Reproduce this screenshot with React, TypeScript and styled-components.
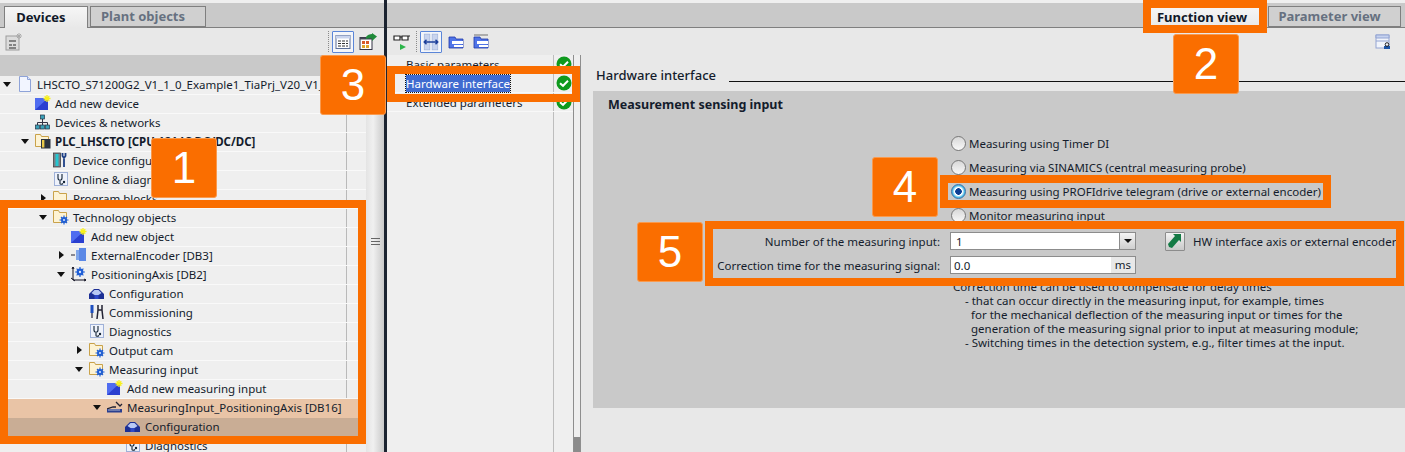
import React from "react";
import styled, { createGlobalStyle } from "styled-components";

const Global = createGlobalStyle`
  html, body { margin: 0; padding: 0; background: #efefef; }
  body { font-family: "Noto Sans", "DejaVu Sans", sans-serif; font-size: 11.5px; color: #141c2c; }
  * { box-sizing: border-box; }
`;

const ORANGE = "#fa6e00";

const Root = styled.div`
  position: relative;
  width: 1405px;
  height: 452px;
  overflow: hidden;
  display: flex;
`;
const LeftPane = styled.div`
  width: 384px;
  display: flex;
  flex-direction: column;
`;
const Divider = styled.div`
  width: 3px;
  background: #1b2330;
`;
const RightPane = styled.div`
  flex: 1;
  display: flex;
  flex-direction: column;
  min-width: 0;
`;
const TabBar = styled.div<{ $end?: boolean }>`
  height: 28px;
  flex: none;
  background: #c9c9c9;
  border-top: 3px solid #efefef;
  border-bottom: 1px solid #7f7f7f;
  display: flex;
  align-items: flex-end;
  justify-content: ${(p) => (p.$end ? "flex-end" : "flex-start")};
  padding: ${(p) => (p.$end ? "0 4px 0 0" : "0 0 0 4px")};
  gap: 2px;
`;
const Tab = styled.div<{ $active?: boolean; $w: number }>`
  width: ${(p) => p.$w}px;
  height: ${(p) => (p.$active ? 22 : 21)}px;
  margin-bottom: ${(p) => (p.$active ? -1 : 0)}px;
  border: 1px solid #7f7f7f;
  border-bottom: ${(p) => (p.$active ? "none" : "1px solid #7f7f7f")};
  background: ${(p) => (p.$active ? "linear-gradient(#f6f6f6, #e8e8e8)" : "#d0d0d0")};
  color: ${(p) => (p.$active ? "#101828" : "#667080")};
  font-size: 13px;
  font-weight: 700;
  padding-right: 10px;
  padding-bottom: 2px;
  display: flex;
  align-items: center;
  justify-content: center;
`;
const Toolbar = styled.div<{ $pad: string }>`
  height: 27px;
  flex: none;
  background: #e8e8e8;
  display: flex;
  align-items: center;
  justify-content: space-between;
  padding: ${(p) => p.$pad};
`;
const ToolGroup = styled.div`
  display: flex;
  align-items: center;
  gap: 3px;
`;
const ToolSep = styled.div`
  width: 1px;
  height: 21px;
  border-left: 1px dotted #8a8a8a;
`;
const ToolBtn = styled.div<{ $on?: boolean }>`
  width: 22px;
  height: 22px;
  display: flex;
  align-items: center;
  justify-content: center;
  border: 1px solid ${(p) => (p.$on ? "#5b86d8" : "transparent")};
  background: ${(p) => (p.$on ? "#f4f6fa" : "transparent")};
  border-radius: 1px;
`;
const GrayHead = styled.div`
  height: 21px;
  flex: none;
  background: #c9c9c9;
`;
const TreeWrap = styled.div`
  flex: 1;
  display: flex;
  min-height: 0;
`;
const Tree = styled.div`
  width: 366px;
  flex: none;
  background: #efefef;
  overflow: hidden;
`;
const Row = styled.div<{ $level: number; $tone?: "open" | "sel" }>`
  height: 19px;
  display: flex;
  align-items: center;
  padding-left: ${(p) => p.$level * 18}px;
  padding-bottom: 2px;
  border-bottom: 1px solid ${(p) => (p.$tone ? "transparent" : "#f9f9f9")};
  background: ${(p) => (p.$tone === "open" ? "#e9c4a6" : p.$tone === "sel" ? "#c9ad95" : "linear-gradient(to right, transparent 346px, #b9b9b9 346px, #b9b9b9 347px, transparent 347px)")};
  white-space: nowrap;
`;
const Arrow = styled.span<{ $dir?: "down" | "right" }>`
  width: 14px;
  flex: none;
  display: flex;
  justify-content: center;
  &::before {
    content: "";
    display: ${(p) => (p.$dir ? "block" : "none")};
    border-style: solid;
    border-color: transparent;
    ${(p) =>
      p.$dir === "down"
        ? "border-width: 5px 4px 0 4px; border-top-color: #111;"
        : "border-width: 4px 0 4px 5px; border-left-color: #111;"}
  }
`;
const IconCell = styled.span`
  width: 18px;
  height: 16px;
  margin-left: 3px;
  flex: none;
  display: flex;
  align-items: center;
  justify-content: flex-start;
`;
const RowText = styled.span<{ $bold?: boolean }>`
  margin-left: 2px;
  font-weight: ${(p) => (p.$bold ? 700 : 400)};
`;
const SplitBar = styled.div`
  flex: 1;
  background: linear-gradient(to right, #e4e4e4, #f0f0f0 40%, #c9c9c9);
  display: flex;
  align-items: center;
  justify-content: center;
  padding-bottom: 46px;
`;
const Grip = styled.div`
  width: 9px;
  height: 7px;
  border-top: 1px solid #666;
  border-bottom: 1px solid #666;
  &::after {
    content: "";
    display: block;
    height: 1px;
    margin-top: 2px;
    background: #666;
  }
`;
const Workspace = styled.div`
  flex: 1;
  display: flex;
  min-height: 0;
`;
const Nav = styled.div`
  width: 186px;
  flex: none;
  background: #efefef;
  display: flex;
  flex-direction: column;
  background-image: linear-gradient(to right, transparent 166px, #bdbdbd 166px, #bdbdbd 167px, transparent 167px);
`;
const NavRow = styled.div`
  height: 19px;
  flex: none;
  display: flex;
  align-items: center;
  justify-content: space-between;
  padding: 0 1px 0 19px;
  border-bottom: 1px solid #f8f8f8;
`;
const NavLabel = styled.span<{ $sel?: boolean }>`
  background: ${(p) => (p.$sel ? "#3f6bd0" : "transparent")};
  color: ${(p) => (p.$sel ? "#fff" : "inherit")};
  outline: ${(p) => (p.$sel ? "1px dotted #111" : "none")};
  line-height: 17px;
`;
const NavScroll = styled.div`
  width: 8px;
  flex: none;
  background: #efefef;
  border-left: 1px solid #8e8e8e;
  border-right: 1px solid #8e8e8e;
  display: flex;
  flex-direction: column;
  justify-content: flex-end;
`;
const NavThumb = styled.div`
  height: 15px;
  background: #8b8b8b;
`;
const Content = styled.div`
  flex: 1;
  min-width: 0;
  background: #e8e8e8;
  padding: 12px 0 44px 12px;
  display: flex;
  flex-direction: column;
`;
const Heading = styled.div`
  height: 24px;
  flex: none;
  display: flex;
  align-items: flex-start;
  padding-left: 3px;
  gap: 13px;
  font-size: 13px;
  font-weight: 500;
  line-height: 17px;
`;
const HeadRule = styled.div`
  flex: 1;
  height: 1px;
  margin-top: 14px;
  background: #111;
`;
const Panel = styled.div`
  flex: 1;
  background: #c9c9c9;
  padding: 5px 11px 0 15px;
  display: flex;
  flex-direction: column;
`;
const PanelTitle = styled.div`
  font-size: 12.5px;
  font-weight: 700;
  line-height: 18px;
`;
const Radios = styled.div`
  margin: 17px 0 0 343px;
  display: flex;
  flex-direction: column;
`;
const RadioRow = styled.div`
  height: 24px;
  display: flex;
  align-items: center;
  gap: 3px;
  white-space: nowrap;
`;
const Radio = styled.span<{ $on?: boolean }>`
  width: 15px;
  height: 15px;
  flex: none;
  border-radius: 50%;
  border: 1px solid ${(p) => (p.$on ? "#3c6ea5" : "#777")};
  background: ${(p) =>
    p.$on
      ? "radial-gradient(circle at 50% 50%, #0c3f94 0 3px, #fff 3.5px 4px, #49bce8 6px)"
      : "linear-gradient(#d8d8d8, #f8f8f8)"};
`;
const FormGrid = styled.div`
  display: grid;
  grid-template-columns: 332px 186px auto;
  grid-auto-rows: 24px;
  align-items: center;
  column-gap: 10px;
  margin-top: 2px;
`;
const FieldLabel = styled.div`
  text-align: right;
  white-space: nowrap;
`;
const Field = styled.div`
  height: 18px;
  background: #fff;
  border: 1px solid #8c8c8c;
  display: flex;
  align-items: center;
  justify-content: space-between;
`;
const FieldValue = styled.span<{ $pad: number }>`
  padding-left: ${(p) => p.$pad}px;
`;
const DropBtn = styled.span`
  width: 16px;
  height: 16px;
  background: linear-gradient(#f4f4f4, #cfcfcf);
  border-left: 1px solid #8c8c8c;
  display: flex;
  align-items: center;
  justify-content: center;
  &::before {
    content: "";
    border-style: solid;
    border-width: 4px 4px 0 4px;
    border-color: #111 transparent transparent transparent;
  }
`;
const Unit = styled.span`
  width: 24px;
  height: 16px;
  background: #e8e8e8;
  line-height: 16px;
  text-align: center;
`;
const LinkCell = styled.div`
  display: flex;
  align-items: center;
  gap: 8px;
  margin-left: 19px;
  white-space: nowrap;
`;
const LinkBtn = styled.span`
  width: 20px;
  height: 19px;
  border: 1px solid #8c8c8c;
  border-radius: 1px;
  background: linear-gradient(#f3f3f3, #c9c9c9);
  display: flex;
  align-items: center;
  justify-content: center;
`;
const Help = styled.div`
  margin: 3px 0 0 345px;
  line-height: 14px;
  white-space: nowrap;
`;
const HelpLine = styled.div<{ $indent: number }>`
  padding-left: ${(p) => p.$indent}px;
`;

const Mark = styled.div<{ $x: number; $y: number; $w: number; $h: number }>`
  position: absolute;
  left: ${(p) => p.$x}px;
  top: ${(p) => p.$y}px;
  width: ${(p) => p.$w}px;
  height: ${(p) => p.$h}px;
  border: 8px solid ${ORANGE};
  pointer-events: none;
`;
const Badge = styled.div<{ $x: number; $y: number }>`
  position: absolute;
  left: ${(p) => p.$x}px;
  top: ${(p) => p.$y}px;
  width: 66px;
  height: 60px;
  background: ${ORANGE};
  border-radius: 3px;
  border: 1px solid #f99a4e;
  color: #fff;
  font-family: "Liberation Sans", Arial, sans-serif;
  font-size: 44px;
  line-height: 58px;
  text-align: center;
`;

/* ---------- icons ---------- */
const Svg = styled.svg`
  display: block;
  flex: none;
`;
const Ico = ({ children, s = 16 }: { children: React.ReactNode; s?: number }) => (
  <Svg width={s} height={s} viewBox="0 0 16 16">{children}</Svg>
);
const Doc = () => (
  <Ico>
    <path d="M2.5 .5h8l3 3v12h-11z" fill="#f2f5ff" stroke="#8ea3d8" />
    <path d="M10.5 .5v3h3" fill="#dfe6fa" stroke="#8ea3d8" />
  </Ico>
);
const AddNew = () => (
  <Ico>
    <path d="M0 3h13v12H0z" fill="#2a3fd0" />
    <path d="M0 3h13L0 15z" fill="#4f6cf0" />
    <path d="M12 0v7M8.5 3.5h7M9.7 1.2l4.6 4.6M14.3 1.2L9.7 5.8" stroke="#f7f01e" strokeWidth="1.3" />
  </Ico>
);
const Network = () => (
  <Ico>
    <path d="M7.5 5v4M2.5 11V8.500h10V11M7.500 8.500V11" stroke="#334" fill="none" />
    <rect x="5.500" y="1" width="4" height="4" fill="#3aa0b8" stroke="#234" strokeWidth=".7" />
    <rect x="0.500" y="11" width="4" height="4" fill="#3aa0b8" stroke="#234" strokeWidth=".7" />
    <rect x="5.500" y="11" width="4" height="4" fill="#3aa0b8" stroke="#234" strokeWidth=".7" />
    <rect x="10.500" y="11" width="4" height="4" fill="#3aa0b8" stroke="#234" strokeWidth=".7" />
  </Ico>
);
const Folder = ({ children }: { children?: React.ReactNode }) => (
  <Ico>
    <path d="M.5 1.500h5l1 2h7v10H.5z" fill="#fdf3d4" stroke="#c9a24a" />
    {children}
  </Ico>
);
const Plc = () => (
  <Folder>
    <rect x="6" y="6" width="9.500" height="9.500" fill="#2b3340" />
    <rect x="7" y="7" width="2.400" height="7.500" fill="#e9c94a" />
  </Folder>
);
const GearMark = ({ x = 11, y = 11, r = 3 }: { x?: number; y?: number; r?: number }) => (
  <g>
    <circle cx={x} cy={y} r={r} fill="#1f5fd6" />
    <path d={`M${x - r - 1.5} ${y}h${2 * r + 3}M${x} ${y - r - 1.5}v${2 * r + 3}M${x - r} ${y - r}l${2 * r} ${2 * r}M${x + r} ${y - r}l${-2 * r} ${2 * r}`} stroke="#1f5fd6" strokeWidth="1.2" />
    <circle cx={x} cy={y} r={r / 3} fill="#dfe9ff" />
  </g>
);
const TechFolder = () => (
  <Folder>
    <GearMark />
  </Folder>
);
const DevConfig = () => (
  <Ico>
    <rect x="0.500" y="1" width="7" height="14" fill="#7b7f87" stroke="#333" strokeWidth=".7" />
    <rect x="2.500" y="2" width="3" height="12" fill="#26c6d0" />
    <path d="M11 7v8M9.500 1v3l1.500 2 1.500-2V1" stroke="#1d3f86" strokeWidth="1.800" fill="none" />
  </Ico>
);
const Diag = () => (
  <Ico>
    <rect x="1.500" y="1.500" width="13" height="13" fill="#eef2fb" stroke="#9fb1d8" />
    <path d="M5 3v4c0 3 4 3 4 0V3M7 10v2.500c0 1 2 1 3 0" stroke="#123" strokeWidth="1.100" fill="none" />
    <circle cx="11" cy="11" r="1.200" fill="#123" />
  </Ico>
);
const Encoder = () => (
  <Ico>
    <path d="M0 8h4" stroke="#223" />
    <rect x="5" y="3" width="4" height="10" fill="#7fa6ea" />
    <rect x="8" y="1" width="7" height="13" fill="#5b88e6" />
  </Ico>
);
const Axis = () => (
  <Ico>
    <path d="M2 1v13h13M0 12l4 3M1 3l1-2 1 2M13 13l2 1-2 1" stroke="#112" fill="none" />
    <GearMark x={9} y={6} r={3.400} />
  </Ico>
);
const Dome = () => (
  <Ico>
    <path d="M0 14V9l5-5h5l5 5v5z" fill="#1c2f95" />
    <path d="M2.500 8l3-3h4l3 3-3 2h-4z" fill="#b8c8f4" />
    <path d="M5.500 10h4v4h-4z" fill="#2f49c8" />
  </Ico>
);
const Tools = () => (
  <Ico>
    <path d="M3 1v8" stroke="#1d4fc0" strokeWidth="3" />
    <path d="M3 9v5" stroke="#556" strokeWidth="1.600" />
    <path d="M9 1v5l-1 9M13 1v5l1 9M9 6h4" stroke="#223" strokeWidth="1.500" fill="none" />
  </Ico>
);
const MeasIcon = () => (
  <Ico>
    <path d="M0 10l6-2h3M9 3l4 4 2-2" stroke="#223" fill="none" strokeWidth="1.300" />
    <rect x="0" y="10" width="15" height="3.500" fill="#2a3f8f" />
    <path d="M2 10v2M4 10v2M6 10v2M8 10v2M10 10v2M12 10v2" stroke="#e9e9e9" strokeWidth=".7" />
  </Ico>
);
const Check = () => (
  <Ico>
    <circle cx="8" cy="8" r="7.500" fill="#0f9a1e" />
    <path d="M4 8.200l3 2.600 5-5" stroke="#fff" strokeWidth="2" fill="none" />
  </Ico>
);
const DeviceGrid = () => (
  <Svg width="18" height="18" viewBox="0 0 18 18">
    <rect x="1" y="3" width="13" height="14" fill="#dcdcdc" stroke="#9c9c9c" />
    <path d="M4 8h7M4 12h3M8 12h3M4 15h7" stroke="#666" strokeWidth="1.500" />
    <path d="M14 0v6M11 3h6M12 1l4 4M16 1l-4 4" stroke="#aaa" />
  </Svg>
);
const TableView = () => (
  <Ico>
    <rect x="1" y="1.500" width="14" height="13" fill="#fff" stroke="#5c6f98" />
    <path d="M1 1.500h14v3H1z" fill="#c9d4ee" />
    <path d="M3 7h10M3 9.500h10M3 12h10" stroke="#333" strokeDasharray="3 1" />
  </Ico>
);
const TableExport = () => (
  <Svg width="18" height="18" viewBox="0 0 18 18">
    <rect x="1" y="4.500" width="12" height="12" fill="#fff" stroke="#334" />
    <path d="M1 4.500h12v2H1z" fill="#445" />
    <path d="M3 8h3v3H3zM7 8h3v3H7z" fill="#d85a2a" />
    <path d="M3 12h3v3H3zM7 12h3v3H7z" fill="#e0a52a" />
    <path d="M7 4c1-2 4-3 6-3V0l5 3.500L13 8V5.500C11 5 9 5 7 6z" fill="#1f8a3a" />
  </Svg>
);
const Glasses = () => (
  <Svg width="18" height="20" viewBox="0 0 18 20">
    <path d="M1 4h6v4H1zM9 4h6v4H9zM7 5h2M15 4h2" stroke="#222" strokeWidth="1.200" fill="#fff" />
    <path d="M7 12l6 3-6 3z" fill="#2bb54a" />
  </Svg>
);
const SplitArrows = () => (
  <Ico s={18}>
    <rect x="2" y="1" width="5" height="14" fill="#c9d4ee" stroke="#9fb1d8" strokeWidth=".6" />
    <rect x="9" y="1" width="5" height="14" fill="#c9d4ee" stroke="#9fb1d8" strokeWidth=".6" />
    <path d="M2 8h12M4 6L2 8l2 2M12 6l2 2-2 2" stroke="#1d3f9a" strokeWidth="1.300" fill="none" />
  </Ico>
);
const BlueFolder = ({ top }: { top?: boolean }) => (
  <Ico>
    {top && <path d="M1 1h14" stroke="#999" strokeWidth="1.500" />}
    <path d="M1 3h6l1 2h7v9H1z" fill="#4f74e8" stroke="#2038a8" strokeWidth=".8" />
    <path d="M4 7h11v3H4z" fill="#fff" />
    <path d="M6 11h9v2H6z" fill="#fff" />
  </Ico>
);
const WinLock = () => (
  <Ico>
    <rect x="1" y="1" width="13" height="13" fill="#f1f4fb" stroke="#93a4d2" />
    <path d="M1 1h13v3H1zM1 7h13" fill="#c6d2ef" stroke="#93a4d2" />
    <path d="M9 15v-3h6v3z" fill="#1c55a8" />
    <circle cx="12" cy="10.500" r="1.800" fill="none" stroke="#222" />
  </Ico>
);
const GoArrow = () => (
  <Ico>
    <path d="M2 14l3 1 7-8 2 2V1H6l2 2-7 8z" fill="#147a45" />
  </Ico>
);

/* ---------- data ---------- */
type Item = {
  level: number;
  icon: React.ReactNode;
  text: string;
  arrow?: "down" | "right";
  bold?: boolean;
  tone?: "open" | "sel";
};
const treeItems: Item[] = [
  { level: 0, arrow: "down", icon: <Doc />, text: "LHSCTO_S71200G2_V1_1_0_Example1_TiaPrj_V20_V1_0" },
  { level: 1, icon: <AddNew />, text: "Add new device" },
  { level: 1, icon: <Network />, text: "Devices & networks" },
  { level: 1, arrow: "down", icon: <Plc />, text: "PLC_LHSCTO [CPU 1214C DC/DC/DC]", bold: true },
  { level: 2, icon: <DevConfig />, text: "Device configuration" },
  { level: 2, icon: <Diag />, text: "Online & diagnostics" },
  { level: 2, arrow: "right", icon: <Folder />, text: "Program blocks" },
  { level: 2, arrow: "down", icon: <TechFolder />, text: "Technology objects" },
  { level: 3, icon: <AddNew />, text: "Add new object" },
  { level: 3, arrow: "right", icon: <Encoder />, text: "ExternalEncoder [DB3]" },
  { level: 3, arrow: "down", icon: <Axis />, text: "PositioningAxis [DB2]" },
  { level: 4, icon: <Dome />, text: "Configuration" },
  { level: 4, icon: <Tools />, text: "Commissioning" },
  { level: 4, icon: <Diag />, text: "Diagnostics" },
  { level: 4, arrow: "right", icon: <TechFolder />, text: "Output cam" },
  { level: 4, arrow: "down", icon: <TechFolder />, text: "Measuring input" },
  { level: 5, icon: <AddNew />, text: "Add new measuring input" },
  { level: 5, arrow: "down", icon: <MeasIcon />, text: "MeasuringInput_PositioningAxis [DB16]", tone: "open" },
  { level: 6, icon: <Dome />, text: "Configuration", tone: "sel" },
  { level: 6, icon: <Diag />, text: "Diagnostics" },
];
const navItems = ["Basic parameters", "Hardware interface", "Extended parameters"];
const radios = [
  "Measuring using Timer DI",
  "Measuring via SINAMICS (central measuring probe)",
  "Measuring using PROFIdrive telegram (drive or external encoder)",
  "Monitor measuring input",
];
const helpLines: [number, string][] = [
  [0, "Correction time can be used to compensate for delay times"],
  [12, "- that can occur directly in the measuring input, for example, times"],
  [18, "for the mechanical deflection of the measuring input or times for the"],
  [18, "generation of the measuring signal prior to input at measuring module;"],
  [12, "- Switching times in the detection system, e.g., filter times at the input."],
];

export default function App() {
  return (
    <Root>
      <Global />
      <LeftPane>
        <TabBar>
          <Tab $active $w={84}>Devices</Tab>
          <Tab $w={116}>Plant objects</Tab>
        </TabBar>
        <Toolbar $pad="0 5px 0 3px">
          <ToolBtn><DeviceGrid /></ToolBtn>
          <ToolGroup>
            <ToolSep />
            <ToolBtn $on><TableView /></ToolBtn>
            <ToolBtn><TableExport /></ToolBtn>
          </ToolGroup>
        </Toolbar>
        <GrayHead />
        <TreeWrap>
          <Tree>
            {treeItems.map((it, i) => (
              <Row key={i} $level={it.level} $tone={it.tone}>
                <Arrow $dir={it.arrow} />
                <IconCell>{it.icon}</IconCell>
                <RowText $bold={it.bold}>{it.text}</RowText>
              </Row>
            ))}
          </Tree>
          <SplitBar><Grip /></SplitBar>
        </TreeWrap>
      </LeftPane>
      <Divider />
      <RightPane>
        <TabBar $end>
          <Tab $active $w={118}>Function view</Tab>
          <Tab $w={133}>Parameter view</Tab>
        </TabBar>
        <Toolbar $pad="0 11px 0 4px">
          <ToolGroup>
            <ToolBtn><Glasses /></ToolBtn>
            <ToolSep />
            <ToolBtn $on><SplitArrows /></ToolBtn>
            <ToolBtn><BlueFolder /></ToolBtn>
            <ToolBtn><BlueFolder top /></ToolBtn>
          </ToolGroup>
          <ToolBtn><WinLock /></ToolBtn>
        </Toolbar>
        <Workspace>
          <Nav>
            {navItems.map((n) => (
              <NavRow key={n}>
                <NavLabel $sel={n === "Hardware interface"}>{n}</NavLabel>
                <Check />
              </NavRow>
            ))}
          </Nav>
          <NavScroll><NavThumb /></NavScroll>
          <Content>
            <Heading>
              Hardware interface
              <HeadRule />
            </Heading>
            <Panel>
              <PanelTitle>Measurement sensing input</PanelTitle>
              <Radios>
                {radios.map((r, i) => (
                  <RadioRow key={r}>
                    <Radio $on={i === 2} />
                    {r}
                  </RadioRow>
                ))}
              </Radios>
              <FormGrid>
                <FieldLabel>Number of the measuring input:</FieldLabel>
                <Field>
                  <FieldValue $pad={5}>1</FieldValue>
                  <DropBtn />
                </Field>
                <LinkCell>
                  <LinkBtn><GoArrow /></LinkBtn>
                  HW interface axis or external encoder
                </LinkCell>
                <FieldLabel>Correction time for the measuring signal:</FieldLabel>
                <Field>
                  <FieldValue $pad={3}>0.0</FieldValue>
                  <Unit>ms</Unit>
                </Field>
              </FormGrid>
              <Help>
                {helpLines.map(([ind, t]) => (
                  <HelpLine key={t} $indent={ind}>{t}</HelpLine>
                ))}
              </Help>
            </Panel>
          </Content>
        </Workspace>
      </RightPane>

      <Mark $x={0} $y={200} $w={366} $h={244} />
      <Mark $x={1143} $y={0} $w={124} $h={33} />
      <Mark $x={387} $y={66} $w={193} $h={36} />
      <Mark $x={940} $y={175} $w={391} $h={33} />
      <Mark $x={705} $y={221} $w={699} $h={65} />
      <Badge $x={151} $y={138}>1</Badge>
      <Badge $x={1173} $y={34}>2</Badge>
      <Badge $x={320} $y={55}>3</Badge>
      <Badge $x={872} $y={157}>4</Badge>
      <Badge $x={637} $y={222}>5</Badge>
    </Root>
  );
}
